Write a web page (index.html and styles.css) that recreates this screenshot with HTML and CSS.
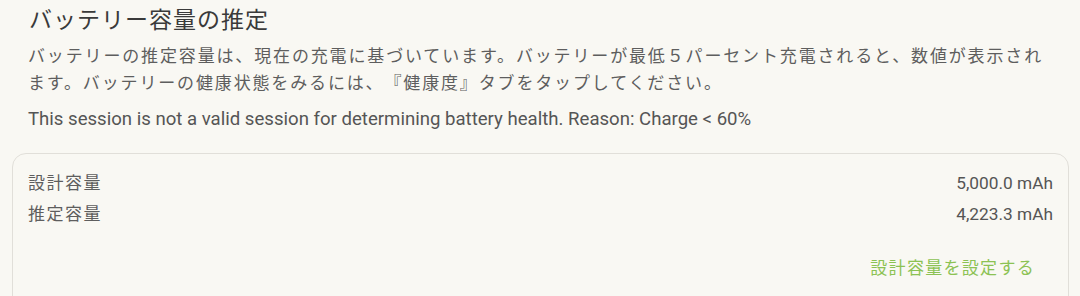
FILE: index.html
```html
<!DOCTYPE html>
<html lang="ja">
<head>
<meta charset="utf-8">
<link rel="stylesheet" href="styles.css">
</head>
<body>
<div class="page">
  <h1 class="title">バッテリー容量の推定</h1>
  <p class="desc">バッテリーの推定容量は、現在の充電に基づいています。バッテリーが最低５パーセント充電されると、数値が表示されます。バッテリーの健康状態をみるには、『健康度』タブをタップしてください。</p>
  <p class="note">This session is not a valid session for determining battery health. Reason: Charge &lt; 60%</p>
  <div class="card">
    <div class="row"><span class="label">設計容量</span><span class="value">5,000.0 mAh</span></div>
    <div class="row"><span class="label">推定容量</span><span class="value">4,223.3 mAh</span></div>
    <div class="actions"><span class="link">設計容量を設定する</span></div>
  </div>
</div>
</body>
</html>
```
FILE: styles.css
```css
html, body {
  margin: 0;
  padding: 0;
  background: #f9f8f3;
  height: 100%;
  overflow: hidden;
}
body {
  font-family: Roboto, "Noto Sans CJK JP", sans-serif;
  color: #5b5b5b;
  text-spacing-trim: space-all;
}
.page {
  padding: 6px 11px 0 12px;
}
.title {
  margin: 0 0 0 17px;
  font-size: 23px;
  line-height: 30px;
  font-weight: 400;
  letter-spacing: 1px;
  color: #3a3a3a;
}
.desc {
  margin: 7px 0 0 16px;
  width: 1030px;
  font-size: 17px;
  line-height: 27px;
  letter-spacing: 1.85px;
  color: #5e5e5e;
}
.note {
  margin: 12px 0 0 16px;
  font-size: 18.6px;
  line-height: 20px;
  color: #555;
}
.card {
  margin-top: 24px;
  border: 1.5px solid #e1dfd9;
  border-radius: 14px;
  padding: 14px 15px 40px 15px;
}
.row {
  display: flex;
  justify-content: space-between;
  align-items: center;
  line-height: 31px;
}
.label {
  font-size: 17px;
  letter-spacing: 1.5px;
  color: #5e5e5e;
}
.value {
  font-size: 17.3px;
  color: #555;
}
.actions {
  display: flex;
  justify-content: flex-end;
  margin-top: 23px;
  padding-right: 18px;
}
.link {
  font-size: 17px;
  line-height: 30px;
  letter-spacing: 1.3px;
  color: #8cc253;
}
```
